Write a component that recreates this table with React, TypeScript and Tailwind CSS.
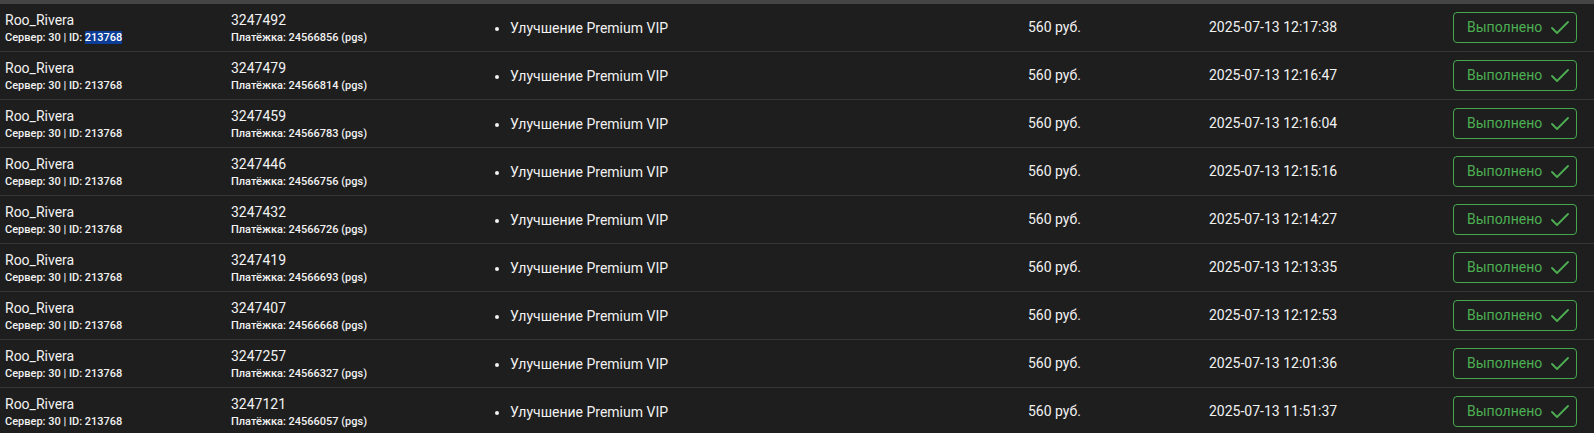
import { Check } from "lucide-react";

const ROWS = [
  { id: "3247492", pay: "24566856", date: "2025-07-13 12:17:38", selected: true },
  { id: "3247479", pay: "24566814", date: "2025-07-13 12:16:47" },
  { id: "3247459", pay: "24566783", date: "2025-07-13 12:16:04" },
  { id: "3247446", pay: "24566756", date: "2025-07-13 12:15:16" },
  { id: "3247432", pay: "24566726", date: "2025-07-13 12:14:27" },
  { id: "3247419", pay: "24566693", date: "2025-07-13 12:13:35" },
  { id: "3247407", pay: "24566668", date: "2025-07-13 12:12:53" },
  { id: "3247257", pay: "24566327", date: "2025-07-13 12:01:36" },
  { id: "3247121", pay: "24566057", date: "2025-07-13 11:51:37" },
];

export default function App() {
  return (
    <div className="min-h-screen w-full bg-[#1e1e1e] text-[#f2f2f2] font-['Roboto',sans-serif] border-t-4 border-[#454545]">
      {ROWS.map((row) => (
        <div
          key={row.id}
          className="flex items-center h-[48px] border-b border-[#363636]"
        >
          {/* player */}
          <div className="w-[231px] pl-[5px] flex flex-col">
            <span className="text-[14px] leading-[20px]">Roo_Rivera</span>
            <span className="text-[11px] leading-[15px] font-medium">
              Сервер: 30 | ID:{" "}
              <span className={row.selected ? "bg-[#0b3d97] text-white" : ""}>213768</span>
            </span>
          </div>

          {/* order */}
          <div className="w-[249px] flex flex-col">
            <span className="text-[14px] leading-[20px]">{row.id}</span>
            <span className="text-[11px] leading-[15px] font-medium">
              Платёжка: {row.pay} (pgs)
            </span>
          </div>

          {/* items */}
          <ul className="w-[548px] list-disc pl-[30px] text-[14px] leading-[20px]">
            <li>Улучшение Premium VIP</li>
          </ul>

          {/* price */}
          <div className="w-[181px] text-[14px]">560 руб.</div>

          {/* date */}
          <div className="w-[160px] text-[14px]">{row.date}</div>

          {/* status */}
          <div className="flex-1 flex justify-end pr-[17px]">
            <div className="flex items-center gap-[6px] h-[31px] w-[124px] pl-[13px] border border-[#45a84d] rounded-[4px] text-[#4cae52] text-[14px]">
              <span>Выполнено</span>
              <Check size={24} strokeWidth={1.8} />
            </div>
          </div>
        </div>
      ))}
    </div>
  );
}
